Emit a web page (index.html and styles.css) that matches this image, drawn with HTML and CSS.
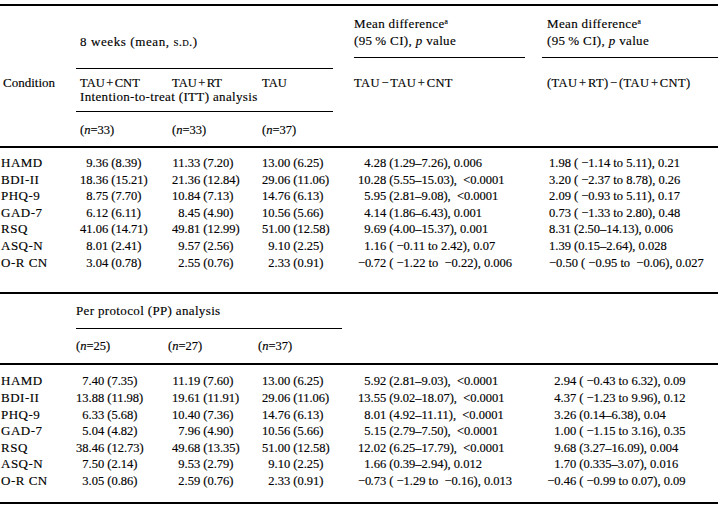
FILE: index.html
```html
<!DOCTYPE html>
<html>
<head>
<meta charset="utf-8">
<link rel="stylesheet" href="styles.css">
</head>
<body>
<div class="table">
  <div class="thick"></div>
  <div class="head">
    <div class="h-cond"><span class="cond">Condition</span></div>
    <div class="h-weeks">
      <div class="h-title">8 weeks (mean, <span class="sc">s.d.</span>)</div>
      <div class="hline w1"></div>
      <div class="h-cols grp"><span>TAU<span class="op">+</span>CNT</span><span>TAU<span class="op">+</span>RT</span><span>TAU</span></div>
      <div class="h-sub txt">Intention-to-treat (ITT) analysis</div>
      <div class="hline w1 l2"></div>
      <div class="h-cols n-row"><span>(<i>n</i>=33)</span><span>(<i>n</i>=33)</span><span>(<i>n</i>=37)</span></div>
    </div>
    <div class="h-md md1">
      <div class="md-line txt">Mean difference<sup>a</sup></div>
      <div class="md-line txt">(95&#8201;% CI), <i>p</i> value</div>
      <div class="hline md-rule"></div>
      <div class="md-col grp">TAU<span class="op">−</span>TAU<span class="op">+</span>CNT</div>
    </div>
    <div class="h-md md2">
      <div class="md-line txt">Mean difference<sup>a</sup></div>
      <div class="md-line txt">(95&#8201;% CI), <i>p</i> value</div>
      <div class="hline md-rule"></div>
      <div class="md-col grp">(TAU<span class="op">+</span>RT)<span class="op">−</span>(TAU<span class="op">+</span>CNT)</div>
    </div>
  </div>
  <div class="thick"></div>

  <div class="body s1">
    <div class="row"><span class="lab">HAMD</span><span class="c1"><span class="i">9</span>.36 (8.39)</span><span class="c2"><span class="i">11</span>.33 (7.20)</span><span class="c3"><span class="i">13</span>.00 (6.25)</span><span class="c4"><span class="i">4</span>.28 (1.29–7.26), 0.006</span><span class="c5">1.98 ( −1.14 to 5.11), 0.21</span></div>
    <div class="row"><span class="lab">BDI-II</span><span class="c1"><span class="i">18</span>.36 (15.21)</span><span class="c2"><span class="i">21</span>.36 (12.84)</span><span class="c3"><span class="i">29</span>.06 (11.06)</span><span class="c4"><span class="i">10</span>.28 (5.55–15.03),&nbsp; &lt;0.0001</span><span class="c5">3.20 ( −2.37 to 8.78), 0.26</span></div>
    <div class="row"><span class="lab">PHQ-9</span><span class="c1"><span class="i">8</span>.75 (7.70)</span><span class="c2"><span class="i">10</span>.84 (7.13)</span><span class="c3"><span class="i">14</span>.76 (6.13)</span><span class="c4"><span class="i">5</span>.95 (2.81–9.08),&nbsp; &lt;0.0001</span><span class="c5">2.09 ( −0.93 to 5.11), 0.17</span></div>
    <div class="row"><span class="lab">GAD-7</span><span class="c1"><span class="i">6</span>.12 (6.11)</span><span class="c2"><span class="i">8</span>.45 (4.90)</span><span class="c3"><span class="i">10</span>.56 (5.66)</span><span class="c4"><span class="i">4</span>.14 (1.86–6.43), 0.001</span><span class="c5">0.73 ( −1.33 to 2.80), 0.48</span></div>
    <div class="row"><span class="lab">RSQ</span><span class="c1"><span class="i">41</span>.06 (14.71)</span><span class="c2"><span class="i">49</span>.81 (12.99)</span><span class="c3"><span class="i">51</span>.00 (12.58)</span><span class="c4"><span class="i">9</span>.69 (4.00–15.37), 0.001</span><span class="c5">8.31 (2.50–14.13), 0.006</span></div>
    <div class="row"><span class="lab">ASQ-N</span><span class="c1"><span class="i">8</span>.01 (2.41)</span><span class="c2"><span class="i">9</span>.57 (2.56)</span><span class="c3"><span class="i">9</span>.10 (2.25)</span><span class="c4"><span class="i">1</span>.16 ( −0.11 to 2.42), 0.07</span><span class="c5">1.39 (0.15–2.64), 0.028</span></div>
    <div class="row"><span class="lab">O-R CN</span><span class="c1"><span class="i">3</span>.04 (0.78)</span><span class="c2"><span class="i">2</span>.55 (0.76)</span><span class="c3"><span class="i">2</span>.33 (0.91)</span><span class="c4"><span class="i">−0</span>.72 ( −1.22 to&nbsp; −0.22), 0.006</span><span class="c5">−0.50 ( −0.95 to&nbsp; −0.06), 0.027</span></div>
  </div>
  <div class="thick"></div>

  <div class="head2">
    <div class="pp-title txt">Per protocol (PP) analysis</div>
    <div class="hline w2"></div>
    <div class="h-cols pp-n"><span>(<i>n</i>=25)</span><span>(<i>n</i>=27)</span><span>(<i>n</i>=37)</span></div>
  </div>
  <div class="thick"></div>

  <div class="body s2">
    <div class="row"><span class="lab">HAMD</span><span class="c1"><span class="i">7</span>.40 (7.35)</span><span class="c2"><span class="i">11</span>.19 (7.60)</span><span class="c3"><span class="i">13</span>.00 (6.25)</span><span class="c4"><span class="i">5</span>.92 (2.81–9.03),&nbsp; &lt;0.0001</span><span class="c5"><span class="i">2</span>.94 ( −0.43 to 6.32), 0.09</span></div>
    <div class="row"><span class="lab">BDI-II</span><span class="c1"><span class="i">13</span>.88 (11.98)</span><span class="c2"><span class="i">19</span>.61 (11.91)</span><span class="c3"><span class="i">29</span>.06 (11.06)</span><span class="c4"><span class="i">13</span>.55 (9.02–18.07),&nbsp; &lt;0.0001</span><span class="c5"><span class="i">4</span>.37 ( −1.23 to 9.96), 0.12</span></div>
    <div class="row"><span class="lab">PHQ-9</span><span class="c1"><span class="i">6</span>.33 (5.68)</span><span class="c2"><span class="i">10</span>.40 (7.36)</span><span class="c3"><span class="i">14</span>.76 (6.13)</span><span class="c4"><span class="i">8</span>.01 (4.92–11.11),&nbsp; &lt;0.0001</span><span class="c5"><span class="i">3</span>.26 (0.14–6.38), 0.04</span></div>
    <div class="row"><span class="lab">GAD-7</span><span class="c1"><span class="i">5</span>.04 (4.82)</span><span class="c2"><span class="i">7</span>.96 (4.90)</span><span class="c3"><span class="i">10</span>.56 (5.66)</span><span class="c4"><span class="i">5</span>.15 (2.79–7.50),&nbsp; &lt;0.0001</span><span class="c5"><span class="i">1</span>.00 ( −1.15 to 3.16), 0.35</span></div>
    <div class="row"><span class="lab">RSQ</span><span class="c1"><span class="i">38</span>.46 (12.73)</span><span class="c2"><span class="i">49</span>.68 (13.35)</span><span class="c3"><span class="i">51</span>.00 (12.58)</span><span class="c4"><span class="i">12</span>.02 (6.25–17.79),&nbsp; &lt;0.0001</span><span class="c5"><span class="i">9</span>.68 (3.27–16.09), 0.004</span></div>
    <div class="row"><span class="lab">ASQ-N</span><span class="c1"><span class="i">7</span>.50 (2.14)</span><span class="c2"><span class="i">9</span>.53 (2.79)</span><span class="c3"><span class="i">9</span>.10 (2.25)</span><span class="c4"><span class="i">1</span>.66 (0.39–2.94), 0.012</span><span class="c5"><span class="i">1</span>.70 (0.335–3.07), 0.016</span></div>
    <div class="row"><span class="lab">O-R CN</span><span class="c1"><span class="i">3</span>.05 (0.86)</span><span class="c2"><span class="i">2</span>.59 (0.76)</span><span class="c3"><span class="i">2</span>.33 (0.91)</span><span class="c4"><span class="i">−0</span>.73 ( −1.29 to&nbsp; −0.16), 0.013</span><span class="c5"><span class="i">−0</span>.46 ( −0.99 to 0.07), 0.09</span></div>
  </div>
  <div class="thick"></div>
</div>
</body>
</html>
```
FILE: styles.css
```css
* { box-sizing: border-box; }

body {
  margin: 0;
  background: #ffffff;
  color: #000000;
  font-family: "Liberation Serif", "Times New Roman", serif;
  font-size: 12.5px;
  line-height: 16.6px;
  -webkit-text-stroke: 0.15px #000000;
}

.table {
  width: 718px;
  padding-top: 4px;
}

.thick {
  height: 2px;
  background: #000000;
}

.hline {
  height: 1px;
  background: #000000;
}

.txt {
  font-size: 13px;
  letter-spacing: 0.35px;
}

.cond { font-size: 13px; }

.sc { font-variant: small-caps; letter-spacing: 0.3px; }

.grp { font-size: 12.5px; }
.op { margin: 0 1.5px; }

i { font-style: italic; }

sup {
  font-size: 7.5px;
  line-height: 0;
  vertical-align: 4px;
  letter-spacing: 0;
}

/* ---------- header ---------- */
.head {
  display: flex;
  height: 140px;
}

.h-cond {
  width: 76px;
  padding: 70px 0 0 3px;
  line-height: 14.4px;
}

.h-weeks {
  width: 278px;
  padding-top: 27.7px;
}

.h-title {
  padding-left: 4px;
  line-height: 16px;
  font-size: 13px;
  letter-spacing: 0.6px;
}

.w1 { width: 257px; margin-top: 18.3px; }
.l2 { margin-top: 6.1px; }

.h-cols {
  display: grid;
  grid-template-columns: 92px 90px 1fr;
  padding-left: 4px;
  line-height: 14.4px;
  margin-top: 7.1px;
}

.h-sub {
  padding-left: 4px;
  line-height: 14.4px;
}

.n-row {
  line-height: 16px;
  margin-top: 10px;
}

.h-md { padding-top: 8.6px; }
.md1 { width: 188px; }
.md2 { flex: 1; }
.md2 .md-line, .md2 .md-col { padding-left: 5px; }

.md-line { line-height: 17.4px; }

.md-rule { margin-top: 7.6px; }
.md1 .md-rule { width: 171px; }

.md-col {
  line-height: 16px;
  margin-top: 17.3px;
  letter-spacing: 0.4px;
}

/* ---------- data ---------- */
.body.s1 { padding: 7px 0 20.5px; }
.body.s2 { padding: 8.4px 0 12.4px; }

.row {
  display: grid;
  grid-template-columns: 76px 92px 90px 96px 188px 1fr;
  line-height: 16.6px;
  white-space: nowrap;
}

.lab {
  padding-left: 1px;
  font-size: 13px;
  letter-spacing: 0.5px;
}
.c1, .c2, .c3, .c4 { padding-left: 4px; }
.c5 { padding-left: 7px; }
.s2 .c1 { padding-left: 0; }
.s2 .c5 { padding-left: 0; }

.i {
  display: inline-block;
  width: 12.5px;
  text-align: right;
}
.s2 .c5 .i { width: 18.5px; }

/* ---------- per protocol header ---------- */
.head2 {
  height: 69.3px;
  padding: 9px 0 0 76px;
}

.pp-title { line-height: 16px; }

.w2 { width: 266px; margin-top: 9.6px; }

.pp-n {
  padding-left: 0;
  line-height: 16px;
  margin-top: 8.7px;
}
```
